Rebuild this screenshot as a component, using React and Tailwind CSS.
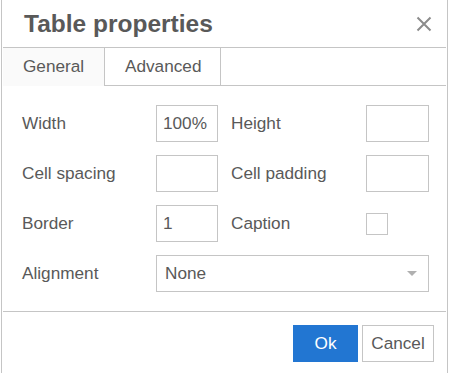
export default function App() {
  const font = { fontFamily: '"Liberation Sans", Arial, sans-serif' };
  const input =
    "h-[37px] border border-[#c5c5c5] bg-white px-[6px] flex items-center text-[17.2px] text-[#595959]";
  const label = "text-[17.2px] text-[#595959] leading-none";
  return (
    <div className="w-[449px] h-[373px] bg-white overflow-hidden" style={font}>
      <div className="ml-[1px] w-[447px] h-[400px] border-x border-[#c5c5c5] bg-white flex flex-col">
        {/* header */}
        <div className="h-[48px] shrink-0 flex items-center justify-between pl-[21px] pr-[14px] border-b border-[#c5c5c5] mx-[1px]">
          <div className="text-[24.5px] font-bold text-[#595959] leading-none mt-[1px]">Table properties</div>
          <svg width="16" height="16" viewBox="0 0 16 16" className="mt-[1px]">
            <path d="M1.5 1.5 L14.5 14.5 M14.5 1.5 L1.5 14.5" stroke="#8c8c8c" strokeWidth="2" fill="none" />
          </svg>
        </div>
        {/* tabs */}
        <div className="flex h-[38px] shrink-0 mx-[1px]">
          <div className="w-[101px] bg-[#fafafa] flex items-center pl-[20px] text-[17.2px] text-[#595959]">General</div>
          <div className="w-[117px] border-x border-b border-[#c5c5c5] flex items-center pl-[20px] text-[17.2px] text-[#595959]">Advanced</div>
          <div className="flex-1 border-b border-[#c5c5c5]"></div>
        </div>
        {/* form */}
        <div className="pl-[20px] pt-[19px] flex flex-col gap-[13px]">
          <div className="flex items-center h-[37px]">
            <div className={`${label} w-[134px]`}>Width</div>
            <div className={`${input} w-[62px] border-[#2276d2]`}>100%</div>
            <div className={`${label} w-[148px] pl-[13px]`}>Height</div>
            <div className={`${input} w-[63px]`}></div>
          </div>
          <div className="flex items-center h-[37px]">
            <div className={`${label} w-[134px]`}>Cell spacing</div>
            <div className={`${input} w-[62px]`}></div>
            <div className={`${label} w-[148px] pl-[13px]`}>Cell padding</div>
            <div className={`${input} w-[63px]`}></div>
          </div>
          <div className="flex items-center h-[37px]">
            <div className={`${label} w-[134px]`}>Border</div>
            <div className={`${input} w-[62px]`}>1</div>
            <div className={`${label} w-[148px] pl-[13px]`}>Caption</div>
            <div className="w-[22px] h-[22px] border border-[#c5c5c5] bg-white"></div>
          </div>
          <div className="flex items-center h-[37px]">
            <div className={`${label} w-[134px]`}>Alignment</div>
            <div className={`${input} w-[273px] justify-between pl-[8px] pr-[11px]`}>
              <span>None</span>
              <svg width="10" height="6" viewBox="0 0 10 6">
                <path d="M0 0 L10 0 L5 5 Z" fill="#b0b0b0" />
              </svg>
            </div>
          </div>
        </div>
        {/* footer */}
        <div className="mt-[19px] mx-[1px] border-t border-[#c5c5c5] flex justify-end gap-[4px] pt-[13px] pr-[12px]">
          <button className="w-[65px] h-[37px] bg-[#2276d2] text-white text-[17.2px] flex items-center justify-center">Ok</button>
          <button className="w-[72px] h-[37px] bg-white border border-[#c5c5c5] text-[#595959] text-[17.2px] flex items-center justify-center">Cancel</button>
        </div>
      </div>
    </div>
  );
}
